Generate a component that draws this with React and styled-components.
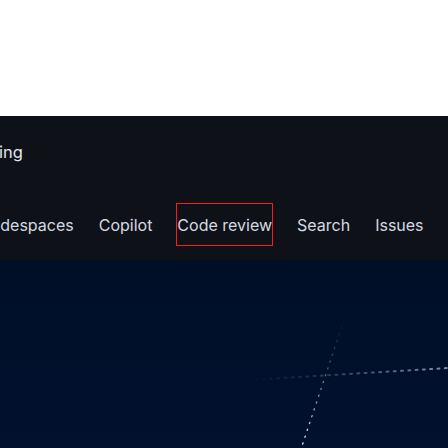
import React from "react";
import styled, { createGlobalStyle } from "styled-components";

const Global = createGlobalStyle`
  html, body { margin: 0; padding: 0; background: #ffffff; }
  body { font-family: Inter, "Noto Sans", sans-serif; overflow: hidden; }
`;

const Page = styled.div`
  width: 448px;
  height: 448px;
  display: flex;
  flex-direction: column;
  overflow: hidden;
`;

const TopBlank = styled.div`
  height: 116px;
  background: #ffffff;
  flex: none;
`;

const Header = styled.header`
  height: 144px;
  flex: none;
  background: #0e1118;
  display: flex;
  flex-direction: column;
  padding-top: 26px;
  box-sizing: border-box;
`;

const Title = styled.div`
  color: #e3e7ec;
  font-size: 16.5px;
  line-height: 20px;
  margin-left: -1px;
`;

const Nav = styled.nav`
  display: flex;
  gap: 25px;
  margin-top: 42px;
  margin-left: -21px;
  white-space: nowrap;
`;

const NavItem = styled.a`
  display: flex;
  align-items: center;
  height: 41px;
  box-sizing: border-box;
  color: #d4d9e1;
  font-size: 16px;
  text-decoration: none;
  outline: ${(p) => (p.$focused ? "1px solid #ff1a1a" : "none")};
`;

const Hero = styled.section`
  flex: 1;
  background: linear-gradient(180deg, #000f28 0%, #01112e 100%);
  display: flex;
`;

const Art = styled.svg`
  display: block;
  width: 100%;
  height: 100%;
`;

const items = ["Codespaces", "Copilot", "Code review", "Search", "Issues", "Pull requests"];

export default function App() {
  return (
    <Page>
      <Global />
      <TopBlank />
      <Header>
        <Title>ing</Title>
        <Nav>
          {items.map((t) => (
            <NavItem key={t} href="#" $focused={t === "Code review"}>
              {t}
            </NavItem>
          ))}
        </Nav>
      </Header>
      <Hero>
        <Art viewBox="0 0 448 188" preserveAspectRatio="none">
          <defs>
            <linearGradient id="hfade" x1="248" y1="0" x2="448" y2="0" gradientUnits="userSpaceOnUse">
              <stop offset="0" stopColor="#5a6a8a" stopOpacity="0" />
              <stop offset="1" stopColor="#8595b5" stopOpacity="0.95" />
            </linearGradient>
            <linearGradient id="dfade" x1="0" y1="60" x2="0" y2="188" gradientUnits="userSpaceOnUse">
              <stop offset="0" stopColor="#c0c8d8" stopOpacity="0" />
              <stop offset="1" stopColor="#ffffff" stopOpacity="1" />
            </linearGradient>
          </defs>
          <line x1="248" y1="120" x2="448" y2="108" stroke="url(#hfade)" strokeWidth="2" strokeDasharray="2 5.3" strokeLinecap="round" />
          <line x1="344" y1="60" x2="300" y2="192" stroke="url(#dfade)" strokeWidth="1.3" strokeDasharray="1.2 6" strokeLinecap="round" />
        </Art>
      </Hero>
    </Page>
  );
}
